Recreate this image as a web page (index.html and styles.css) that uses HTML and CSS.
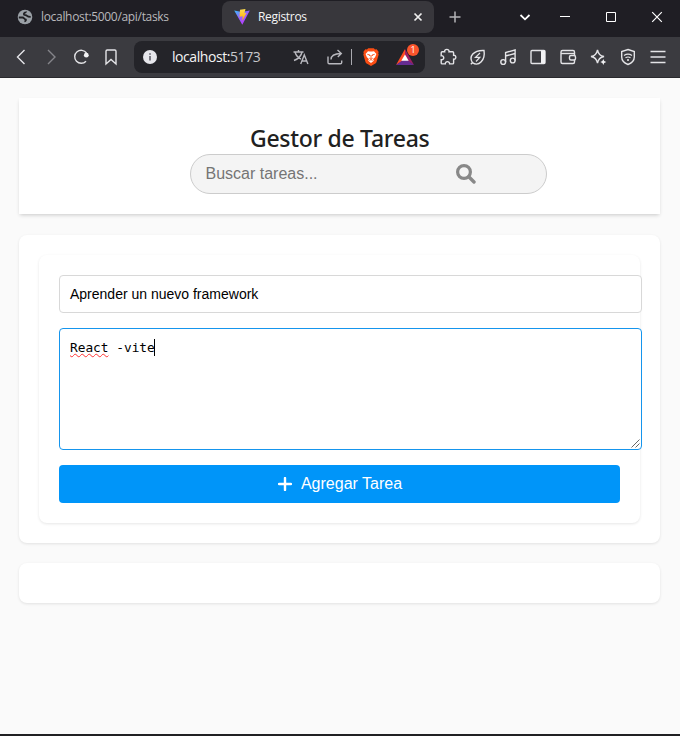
FILE: index.html
```html
<!DOCTYPE html>
<html lang="es">
<head>
<meta charset="utf-8">
<title>Registros</title>
<link rel="stylesheet" href="styles.css">
</head>
<body>
<div class="tabs">
  <div class="tab tab-idle">
    <svg class="favicon" viewBox="0 0 16 16"><circle cx="8" cy="8" r="7.3" fill="#9aa0a6"/><path d="M1.800 8.500h3.700c1.700 0 1.700 2 3.200 2 .5 0 .3 1.600-1.300 2M9 2.500c.2 1.300-2.200 1-2.200 2.500 0 1.700 2.200.8 3.200 1.800.8.900 2 1 3.700 1" fill="none" stroke="#202024" stroke-width="1.800"/></svg>
    <span class="tab-title idle-title">localhost:5000/api/tasks</span>
  </div>
  <div class="tab tab-active">
    <svg class="favicon" viewBox="0 0 16 16">
      <defs>
        <linearGradient id="v" x1="0" y1="0" x2=".7" y2="1"><stop stop-color="#36bffa"/><stop offset=".5" stop-color="#9560ff"/><stop offset="1" stop-color="#bd34fe"/></linearGradient>
        <linearGradient id="b" x1="0" y1="0" x2="0" y2="1"><stop stop-color="#ffdf4f"/><stop offset="1" stop-color="#ffa800"/></linearGradient>
      </defs>
      <path d="M.2 1.500 8 3l7.800-1.500L8.300 15.800Z" fill="url(#v)"/><path d="m6 .8 5.500-.8-1.100 4.300 2.100-.3L8.200 12l.5-4.700-3.200.5Z" fill="url(#b)"/>
    </svg>
    <span class="tab-title active-title">Registros</span>
    <svg class="tab-close" viewBox="0 0 10 10"><path d="m1.500 1.500 7 7m0-7-7 7" stroke="#eee" stroke-width="1.700"/></svg>
  </div>
  <svg class="new-tab" viewBox="0 0 12 12"><path d="M6 .5v11M.5 6h11" stroke="#b5b5b8" stroke-width="1.500"/></svg>
  <div class="window-controls">
    <svg class="chevron" viewBox="0 0 14 14"><path d="m2.500 5 4.500 4.300L11.500 5" fill="none" stroke="#fff" stroke-width="1.800"/></svg>
    <svg viewBox="0 0 46 34"><path d="M18 16.500h10" stroke="#fff"/></svg>
    <svg viewBox="0 0 46 34"><path d="M18.500 12.500h9v9h-9z" fill="none" stroke="#fff"/></svg>
    <svg viewBox="0 0 46 34"><path d="m18.200 12.200 9.600 9.600m0-9.600-9.600 9.600" stroke="#fff" stroke-width="1.200"/></svg>
  </div>
</div>
<div class="toolbar">
  <div class="icons">
    <svg viewBox="0 0 30 40"><path d="m18.500 13-7 7 7 7" class="ln"/></svg>
    <svg viewBox="0 0 30 40"><path d="m12 13 7 7-7 7" class="ln dim"/></svg>
    <svg viewBox="0 0 30 40"><path d="M20 24.200A6.500 6.500 0 1 1 20.500 16" class="ln"/><circle cx="20.300" cy="18.200" r="2.400" fill="#f2f2f4"/></svg>
    <svg viewBox="0 0 30 40"><path d="M11.200 13h7.600q1.200 0 1.200 1.200V27l-5-4.500-5 4.500V14.200q0-1.200 1.200-1.200Z" class="ln"/></svg>
  </div>
  <div class="address">
    <svg class="info" viewBox="0 0 14 14"><circle cx="7" cy="7" r="7" fill="#e6e6eb"/><path d="M7 6v4.500M7 3.300v1.500" stroke="#555560" stroke-width="1.500"/></svg>
    <span class="url">localhost:<span class="port">5173</span></span>
    <svg class="translate" viewBox="0 0 18 18"><path d="M1.500 4h10M6.500 2v2M3 4c1 3.500 3.500 6 6 7M10 4c-.8 4-4 7-8 8.500M8.700 16l3.600-9 3.600 9M10 13h4.800" class="soft"/></svg>
    <svg class="share" viewBox="0 0 18 18"><path d="M2 8.500v6q0 1.200 1.200 1.200h11.300q1.200 0 1.200-1.200v-2M5 11.500c0-4 3-5.800 10-6M11.500 2l3.800 3.500-3.500 3.600" class="soft"/></svg>
    <span class="divider"></span>
    <svg class="brave" viewBox="0 0 16 18"><path d="m4 1.500 1.200-1.200h5.600L12 1.500l1.700-.2 2 2.700-.5 1.200.5 1.300-2.200 7.500q-.4 1-1.200 1.500L8 18l-4.300-2.500q-.8-.5-1.200-1.500L.3 6.500l.5-1.300L.3 4l2-2.700Z" fill="#fb4d13"/><path d="m5 3.200 2 .4h2l2-.4 2.400 2.700-1.300 3.400-2 1.700.7 1.700L8 15l-2.800-2.300.7-1.700-2-1.700-1.300-3.400Z" fill="#fff"/><path d="m4.300 6.300 2.600.7-.5 1m5.300-1.700-2.600.7.500 1M8 7v3m-1.700.2L8 11l1.700-.8M6.500 12.500 8 11.500l1.500 1" fill="none" stroke="#fb4d13" stroke-width=".9"/></svg>
    <div class="rewards">
      <svg viewBox="0 0 18 16"><path d="M9 0 0 16l9-5.500Z" fill="#ff4b24"/><path d="M9 0v10.500L18 16Z" fill="#9e1f63"/><path d="M0 16 9 9.500 18 16Z" fill="#662d91"/><path d="m9 5.500 3.700 6.300H5.300Z" fill="#fff"/></svg>
      <span class="badge">1</span>
    </div>
  </div>
  <div class="icons">
    <svg viewBox="0 0 30 40"><path d="M9.200 14.800h2.500c-.8-3.200 5-3.200 4.300 0h3.600q1 0 1 1v2.500c3-.6 3 4.400 0 3.900v3.700q0 1-1 1h-3c.2-3-4.500-3-4.300 0H9.200q-1 0-1-1v-3.200c3.400.5 3.400-4.500 0-4v-2.900q0-1 1-1Z" class="ln"/></svg>
    <svg viewBox="0 0 30 40"><path d="M9.400 25.700C5.500 19.500 10.500 13 21 13.500 22.500 23 16 30 9.400 25.700Zm-1.600 1.500 1.600-1.500" class="ln"/><path d="m17 16-4.500 4.300h4.300L13 24.500" class="ln thin"/></svg>
    <svg viewBox="0 0 30 40"><circle cx="10.200" cy="25" r="2.400" class="ln"/><circle cx="19.700" cy="23.500" r="2.400" class="ln"/><path d="M12.600 25V15.500L22.100 13v10.500M12.600 19l9.500-2.500" class="ln"/></svg>
    <svg viewBox="0 0 30 40"><rect x="8" y="13.500" width="14" height="13" rx="1" class="ln"/><path d="M18 13.500h4v13h-4z" fill="#f2f2f4"/></svg>
    <svg viewBox="0 0 30 40"><rect x="8" y="13.500" width="13.500" height="13" rx="1.500" class="ln"/><path d="M8 16.500h13.500" class="ln"/><rect x="16.500" y="18.500" width="6" height="4.500" rx="1.500" fill="#3b3b40" class="line"/></svg>
    <svg viewBox="0 0 30 40"><path d="M14.500 12.800q1 5.700 6.500 6.700-5.500 1-6.500 6.700-1-5.700-6.500-6.700 5.500-1 6.500-6.700Z" class="ln"/><path d="m20.300 22 .9 2.100 2.100.9-2.100.9-.9 2.100-.9-2.100-2.100-.9 2.100-.9Z" fill="#f2f2f4"/></svg>
    <svg viewBox="0 0 30 40"><path d="m15 12.500 6.300 2v5.500q0 5-6.300 7.500-6.300-2.500-6.300-7.500v-5.500Z" class="ln"/><path d="M11 18.500q4-2.700 8 0M12.500 20.800q2.500-1.600 5 0" class="ln thin"/><circle cx="15" cy="23" r="1" fill="#eee"/></svg>
    <svg viewBox="0 0 30 40"><path d="M7.500 14.500h15m-15 5.500h15m-15 5.500h15" class="ln"/></svg>
  </div>
</div>
<main class="page">
  <header class="header">
    <h1>Gestor de Tareas</h1>
    <div class="search">
      <span>Buscar tareas...</span>
      <svg viewBox="0 0 20 20"><circle cx="8" cy="8" r="6.400" fill="none" stroke="#888" stroke-width="3.200"/><path d="m12.800 12.800 5.200 5.200" stroke="#888" stroke-width="3.400" stroke-linecap="round"/></svg>
    </div>
  </header>
  <section class="card">
    <div class="form">
      <div class="field">Aprender un nuevo framework</div>
      <div class="field area"><span class="spell">React</span> -vite<span class="caret"></span>
        <svg class="grip" viewBox="0 0 9 9"><path d="M.5 8.500l8-8m-4 8 4-4" stroke="#555" stroke-width=".9"/></svg>
      </div>
      <div class="button"><svg viewBox="0 0 14 14"><path d="M7 1v12M1 7h12" stroke="#fff" stroke-width="2.400" stroke-linecap="round"/></svg><span>Agregar Tarea</span></div>
    </div>
  </section>
  <section class="card"></section>
</main>
</body>
</html>
```

FILE: styles.css
```css
* { box-sizing: border-box; }
body {
  margin: 0;
  height: 736px;
  display: flex;
  flex-direction: column;
  overflow: hidden;
  background: #fafafa;
  border-bottom: 2px solid #202023;
  font-family: "Liberation Sans", Arial, sans-serif;
}
svg { display: block; flex: none; }

.tabs {
  height: 37px;
  flex: none;
  display: flex;
  background: #1f1e24;
  padding-top: 1px;
  font-family: "Open Sans", sans-serif;
  font-size: 12px;
}
.tab { height: 32px; display: flex; align-items: center; gap: 8px; white-space: nowrap; }
.tab-idle { width: 222px; padding-left: 17px; color: #b9b9bc; }
.tab-active { width: 212px; padding: 0 11px 0 12px; background: #38373c; border-radius: 8px; color: #f5f5f5; }
.favicon { width: 16px; height: 16px; }
.tab-title { line-height: 16px; }
.idle-title { letter-spacing: -.32px; }
.active-title { letter-spacing: -.31px; }
.tab-close { width: 10px; height: 10px; margin-left: auto; }
.new-tab { width: 12px; height: 12px; margin: 10px 0 0 15px; }
.window-controls { display: flex; margin-left: auto; margin-top: -1px; }
.window-controls svg { width: 46px; height: 34px; }
.window-controls .chevron { width: 14px; height: 14px; margin: 10px 10px 0 0; }

.toolbar {
  height: 41px;
  flex: none;
  display: flex;
  align-items: center;
  padding-left: 6px;
  background: #3b3b40;
  border-bottom: 1px solid #29292d;
}
.icons { display: flex; }
.icons svg { width: 30px; height: 40px; }
.ln, .line { stroke: #e4e4e7; stroke-width: 1.400; }
.ln { fill: none; }
.dim { stroke: #85858a; }
.thin { stroke-width: 1.200; }
.soft { fill: none; stroke: #b8b8be; stroke-width: 1.400; }
.address {
  width: 291px;
  height: 32px;
  margin: 0 8px;
  padding-left: 9px;
  display: flex;
  align-items: center;
  background: #242429;
  border-radius: 8px;
}
.info { width: 14px; height: 14px; }
.url {
  width: 134px;
  padding-left: 15px;
  color: #f3f3f4;
  font: 14px/20px "Open Sans", sans-serif;
  letter-spacing: -.43px;
}
.port { color: #c7c7ca; }
.translate { width: 18px; height: 18px; margin-left: 1px; }
.share { width: 18px; height: 18px; margin-left: 16px; }
.divider { width: 1px; height: 16px; margin-left: 7px; background: #aaaab0; }
.brave { width: 16px; height: 18px; margin-left: 11px; }
.rewards { position: relative; margin-left: 17px; }
.rewards svg { width: 18px; height: 16px; }
.badge {
  position: absolute;
  left: 11px;
  top: -5px;
  width: 12px;
  height: 12px;
  border-radius: 6px;
  background: #fb542b;
  color: #fff;
  font: 9px/12px "Open Sans", sans-serif;
  text-align: center;
}

.page { padding: 20px 20px 0 19px; flex: 1; }
.header {
  height: 116px;
  padding-top: 24px;
  background: #fff;
  box-shadow: 0 2px 4px -1px rgba(0, 0, 0, .2);
}
h1 {
  margin: 0 0 0 231px;
  color: #212121;
  font: 500 23px/32px "Noto Sans", "Open Sans", sans-serif;
  letter-spacing: -.3px;
  white-space: nowrap;
}
.search {
  width: 357px;
  height: 40px;
  margin-left: 171px;
  padding: 0 70px 0 14.500px;
  display: flex;
  align-items: center;
  justify-content: space-between;
  border: 1px solid #ccc;
  border-radius: 20px;
  background: #f4f4f4;
  color: #757575;
  font-size: 16px;
}
.search svg { width: 20px; height: 20px; }
.card {
  min-height: 40px;
  margin-top: 20px;
  padding: 20px;
  background: #fff;
  border-radius: 8px;
  box-shadow: 0 1px 3px rgba(0, 0, 0, .1);
}
.header + .card { margin-top: 21px; }
.form {
  height: 268px;
  padding: 20px;
  display: flex;
  flex-direction: column;
  gap: 15px;
  border-radius: 8px;
  box-shadow: 0 1px 3px rgba(0, 0, 0, .1);
}
.field {
  width: 583px;
  height: 38px;
  flex: none;
  padding: 0 10px;
  border: 1px solid #d8d8d8;
  border-radius: 4px;
  background: #fff;
  color: #000;
  font-size: 14px;
  line-height: 36px;
}
.area {
  position: relative;
  height: 122px;
  padding-top: 10px;
  border-color: #1595ed;
  font: 12.8px/16px "DejaVu Sans Mono", monospace;
}
.spell { text-decoration: underline wavy #f33 1.300px; text-decoration-skip-ink: none; }
.caret { display: inline-block; width: 1px; height: 17px; margin-left: -1px; background: #000; vertical-align: -4px; }
.grip { position: absolute; right: 1px; bottom: 1px; width: 9px; height: 9px; }
.button {
  height: 38px;
  display: flex;
  align-items: center;
  justify-content: center;
  gap: 9px;
  padding-left: 1px;
  background: #0095f9;
  border-radius: 4px;
  color: #fff;
  font-size: 16px;
}
.button svg { width: 14px; height: 14px; }
```
